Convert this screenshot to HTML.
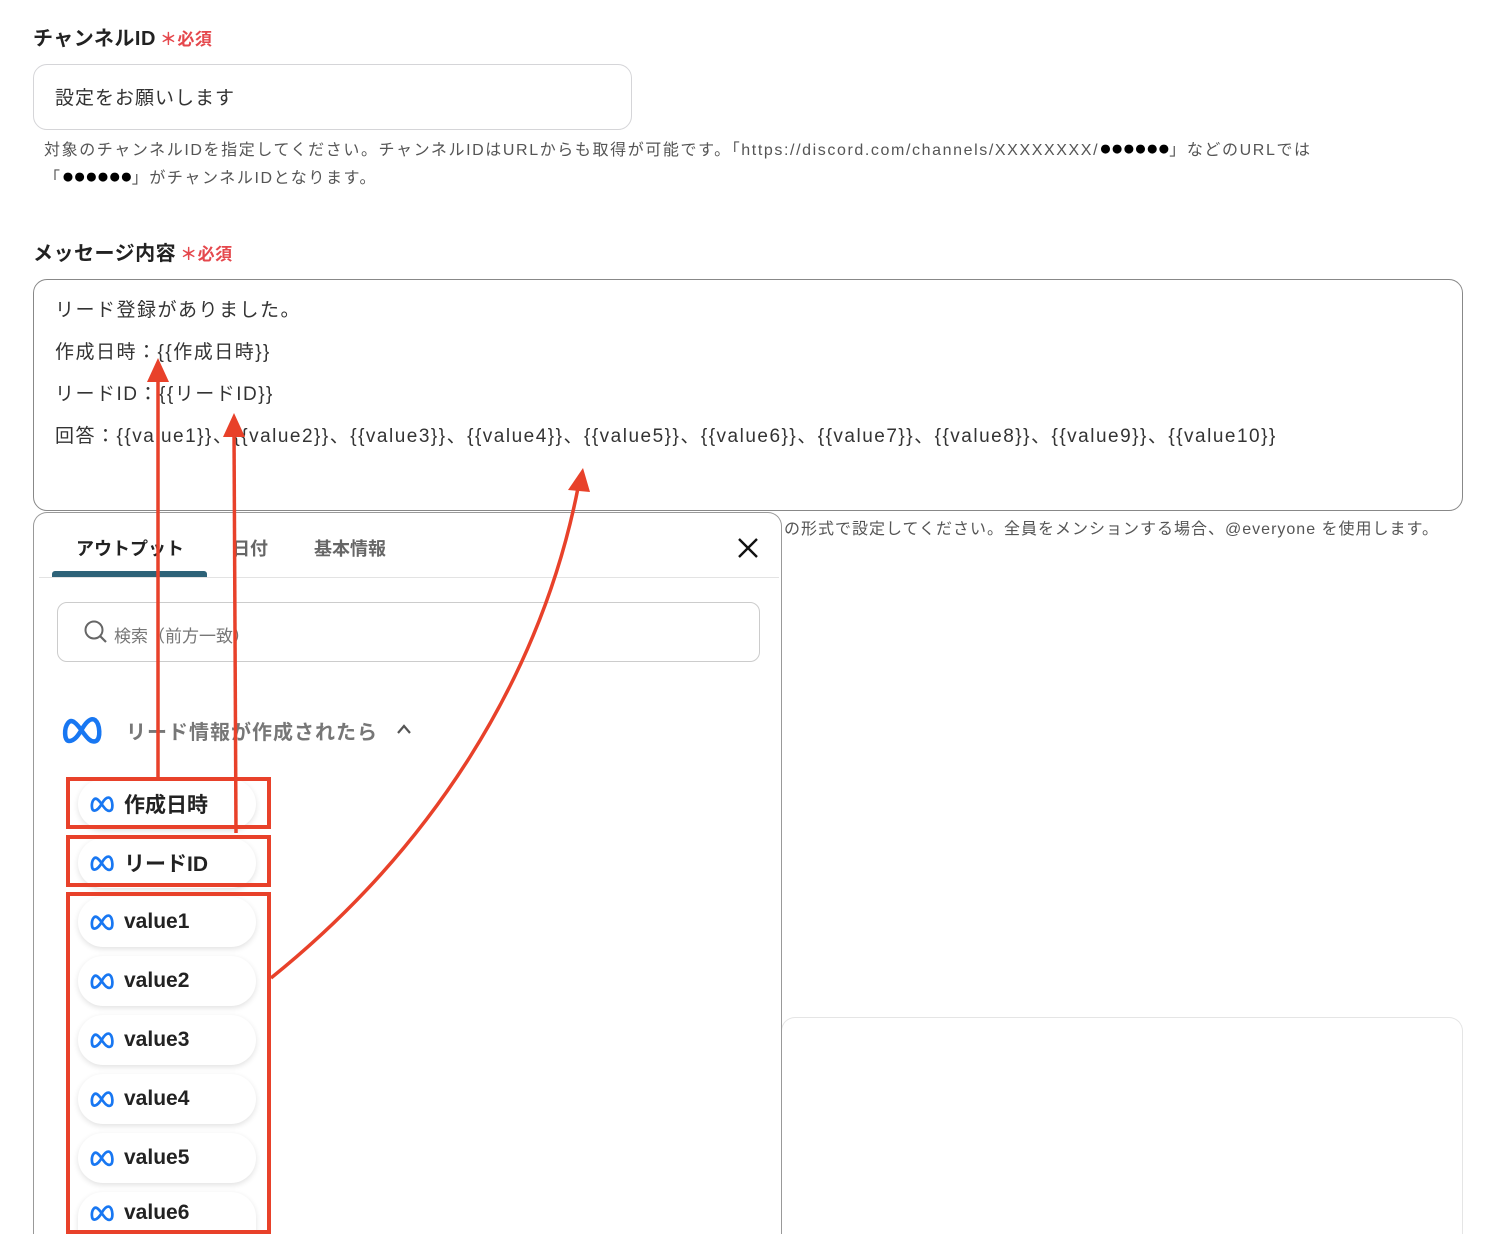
<!DOCTYPE html>
<html><head><meta charset="utf-8"><style>
*{box-sizing:border-box;margin:0;padding:0}
html,body{width:1492px;height:1234px;overflow:hidden}
body{background:#fff;font-family:"Liberation Sans","Noto Sans CJK JP",sans-serif;color:#333;position:relative}
.abs{position:absolute}
.lbl{font-size:20px;font-weight:bold;color:#222;letter-spacing:.5px}
.req{color:#e5484d;font-size:17px;font-weight:bold;margin-left:4px}
.help{font-size:16px;color:#555;line-height:26px;letter-spacing:1.6px;white-space:nowrap}
.dots{font-size:21px;color:#000;letter-spacing:-1px}
.item{position:absolute;left:78px;width:178px;height:50px;border-radius:25px;background:#fff;box-shadow:0 2px 6px rgba(0,0,0,.12);font-size:21px;font-weight:bold;color:#222;display:flex;align-items:center;padding-left:12px}
.item svg{margin-right:10px}
.rb{position:absolute;border:4px solid #e8412a}
</style></head><body>
<div class="abs lbl" style="left:33px;top:22px">チャンネルID<span class="req">＊必須</span></div>
<div class="abs" style="left:33px;top:64px;width:599px;height:66px;border:1px solid #d5d5d8;border-radius:14px;font-size:19px;padding:18px 21px;color:#333;letter-spacing:1px">設定をお願いします</div>
<div class="abs help" style="left:44px;top:136px">対象のチャンネルIDを指定してください。チャンネルIDはURLからも取得が可能です。「https://discord.com/channels/XXXXXXXX/<span class="dots">●●●●●●</span>」などのURLでは<br>「<span class="dots">●●●●●●</span>」がチャンネルIDとなります。</div>
<div class="abs lbl" style="left:33px;top:237px">メッセージ内容<span class="req">＊必須</span></div>
<div class="abs" style="left:33px;top:279px;width:1430px;height:232px;border:1px solid #888;border-radius:14px;font-size:19px;line-height:42px;padding:10px 21px;color:#333;letter-spacing:1.5px;white-space:nowrap">リード登録がありました。<br>作成日時：{{作成日時}}<br>リードID：{{リードID}}<br>回答：{{value1}}、{{value2}}、{{value3}}、{{value4}}、{{value5}}、{{value6}}、{{value7}}、{{value8}}、{{value9}}、{{value10}}</div>
<div class="abs help" style="left:784px;top:517px;letter-spacing:1px">の形式で設定してください。全員をメンションする場合、@everyone を使用します。</div>
<div class="abs" style="left:781px;top:1017px;width:682px;height:217px;border:1px solid #e5e5e5;border-bottom:none;border-radius:14px 14px 0 0"></div>
<div class="abs" style="left:33px;top:512px;width:749px;height:722px;border:1px solid #999;border-bottom:none;border-radius:14px 14px 0 0;background:#fff">
 <div class="abs" style="left:42px;top:22px;font-size:18px;font-weight:bold;color:#222">アウトプット</div>
 <div class="abs" style="left:198px;top:22px;font-size:18px;font-weight:bold;color:#666">日付</div>
 <div class="abs" style="left:280px;top:22px;font-size:18px;font-weight:bold;color:#666">基本情報</div>
 <div class="abs" style="left:18px;top:58px;width:155px;height:6px;background:#2d6278;border-radius:3px 3px 0 0"></div>
 <div class="abs" style="left:5px;top:64px;width:740px;height:1px;background:#e3e3e3"></div>
 <svg class="abs" style="left:702px;top:23px" width="24" height="24"><path d="M3 3L21 21M21 3L3 21" stroke="#111" stroke-width="2.4"/></svg>
 <div class="abs" style="left:23px;top:89px;width:703px;height:60px;border:1px solid #ccc;border-radius:10px"></div>
 <svg class="abs" style="left:49px;top:106px" width="26" height="26"><circle cx="11" cy="11" r="8.5" fill="none" stroke="#666" stroke-width="2"/><path d="M17 17L23 23" stroke="#666" stroke-width="2.2"/></svg>
 <div class="abs" style="left:80px;top:109px;font-size:17px;color:#777">検索（前方一致）</div>
 <svg class="abs" style="left:28px;top:201px" width="40" height="32" viewBox="0 0 40 32"><path d="M7 27C2 27 2 14 6 9C10 4 15 10 20 17C25 24 29 29 34 27C39 25 38 10 33 6C28 3 23 10 20 15C17 20 13 27 7 27" fill="none" stroke="#1877f2" stroke-width="4.5" stroke-linecap="round"/></svg>
 <div class="abs" style="left:92px;top:203px;font-size:20px;font-weight:bold;color:#777;letter-spacing:1px">リード情報が作成されたら</div>
 <svg class="abs" style="left:362px;top:210px" width="16" height="12"><path d="M2 10L8 3L14 10" fill="none" stroke="#555" stroke-width="2.2"/></svg>
</div>
<div class="item" style="top:779px">__M__作成日時</div>
<div class="item" style="top:838px">__M__リードID</div>
<div class="item" style="top:897px">__M__value1</div>
<div class="item" style="top:956px">__M__value2</div>
<div class="item" style="top:1015px">__M__value3</div>
<div class="item" style="top:1074px">__M__value4</div>
<div class="item" style="top:1133px">__M__value5</div>
<div class="item" style="top:1192px;height:42px;border-radius:25px 25px 0 0">__M__value6</div>
<div class="rb" style="left:66px;top:777px;width:205px;height:52px"></div>
<div class="rb" style="left:66px;top:835px;width:205px;height:52px"></div>
<div class="rb" style="left:66px;top:892px;width:205px;height:342px"></div>
<svg class="abs" style="left:0;top:0" width="1492" height="1234">
<g stroke="#e8412a" stroke-width="3.5" fill="none">
<path d="M158 777L158 375"/>
<path d="M236 833L234 430"/>
<path d="M271 978C430 850 540 680 578 488"/>
</g>
<g fill="#e8412a">
<path d="M158 358L147 382L169 382Z"/>
<path d="M234 413L223 437L245 437Z"/>
<path d="M583 468L568 490L590 492Z"/>
</g>
</svg>
<script>
var m='<svg width="24" height="20" viewBox="0 0 40 32"><path d="M7 27C2 27 2 14 6 9C10 4 15 10 20 17C25 24 29 29 34 27C39 25 38 10 33 6C28 3 23 10 20 15C17 20 13 27 7 27" fill="none" stroke="#1877f2" stroke-width="4.5" stroke-linecap="round"/></svg>';
document.querySelectorAll('.item').forEach(function(e){e.innerHTML=e.innerHTML.replace('__M__',m)});
</script>
</body></html>
